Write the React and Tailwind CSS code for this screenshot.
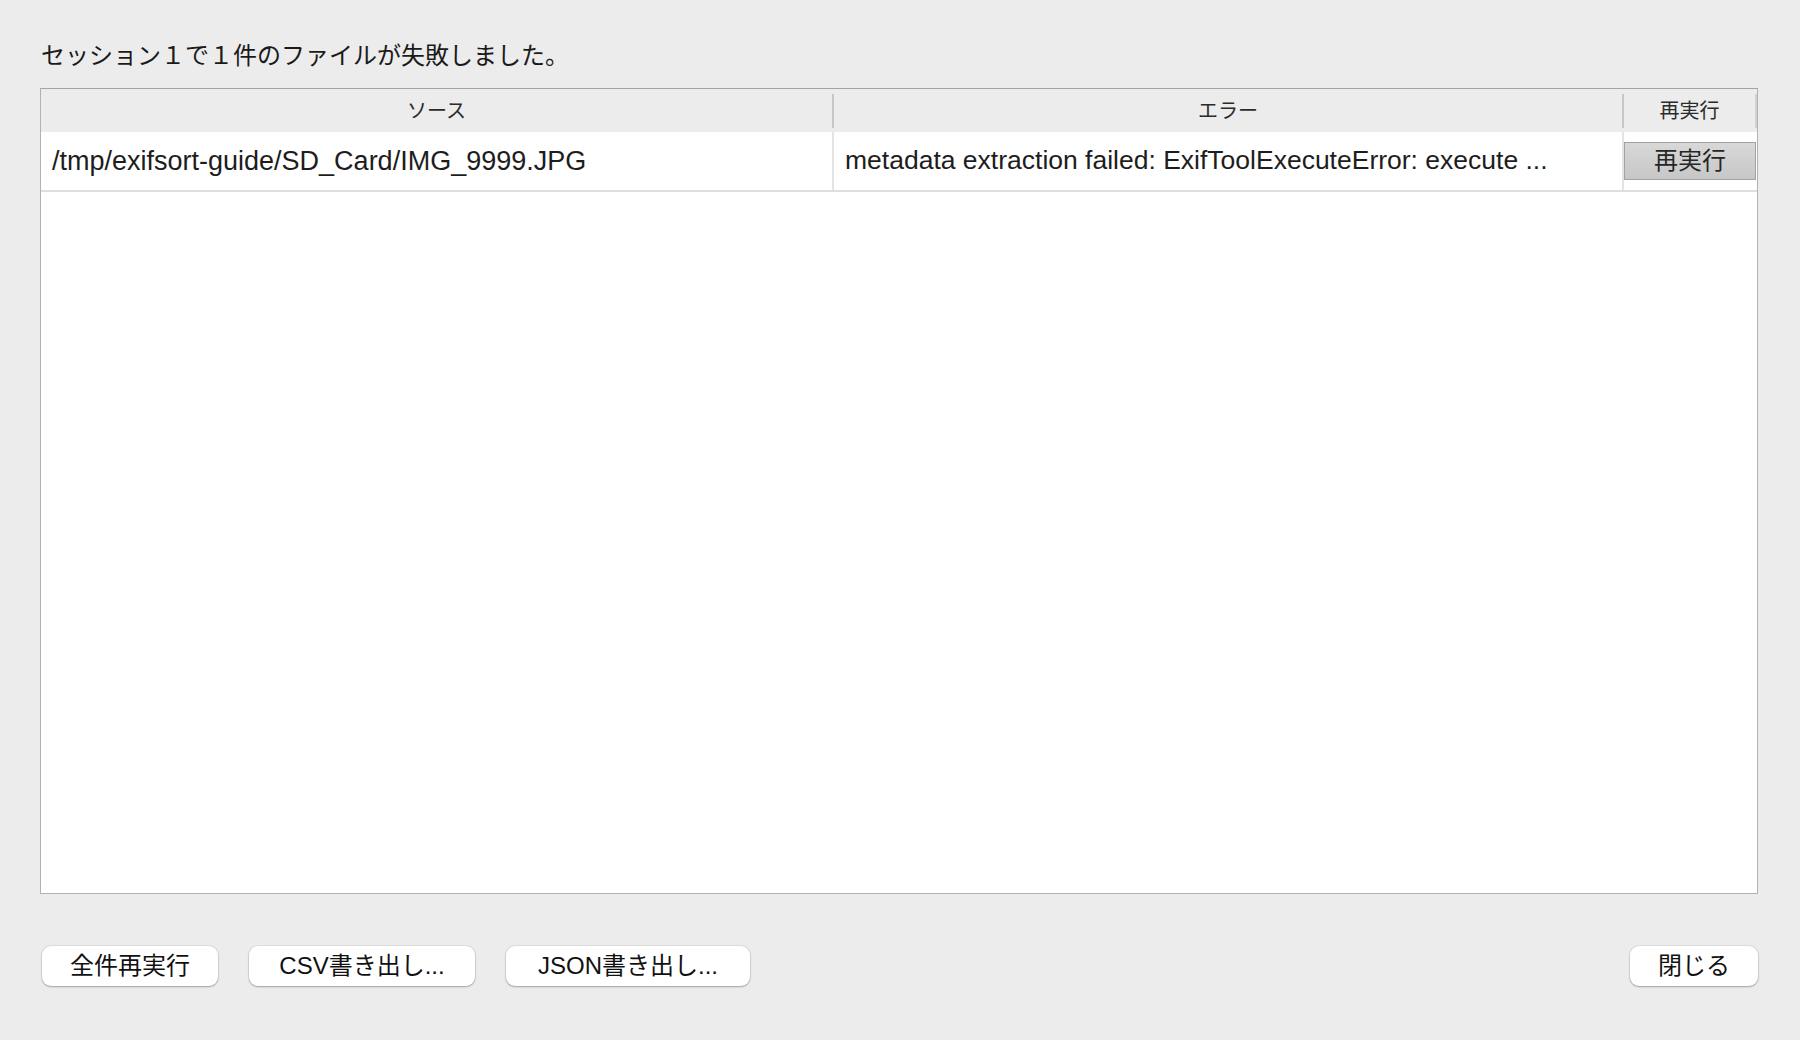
import React from 'react';

const failures = [
  {
    source: '/tmp/exifsort-guide/SD_Card/IMG_9999.JPG',
    error: 'metadata extraction failed: ExifToolExecuteError: execute ...',
  },
];

function HeaderCell({ label, width, last }) {
  return (
    <>
      <div className={`${width} flex items-center justify-center text-[20px] leading-[26px] text-[#2b2b2b]`}>
        {label}
      </div>
      <div className={`w-[2px] h-[34px] ${last ? 'bg-[#d2d2d2]' : 'bg-[#c6c6c6]'}`} />
    </>
  );
}

function FooterButton({ children, width }) {
  return (
    <button
      className={`${width} h-[40px] rounded-[9px] bg-white text-[24px] leading-[30px] text-[#111] flex items-center justify-center shadow-[0_0_0_1px_rgba(0,0,0,0.06),0_1px_2px_rgba(0,0,0,0.28)]`}
    >
      {children}
    </button>
  );
}

export default function App() {
  return (
    <div className="h-[1040px] w-full bg-[#ececec] pl-[40px] pr-[42px] pt-[40px] flex flex-col font-['Liberation_Sans','Noto_Sans_CJK_JP',sans-serif] text-[#1a1a1a]">
      <div className="h-[32px] leading-[32px] text-[24px] mb-[16px] pl-[1px]">
        セッション１で１件のファイルが失敗しました。
      </div>

      <div className="h-[806px] border border-[#b2b2b2] border-t-[#a4a4a4] bg-white flex flex-col">
        <div className="h-[43px] bg-[#ececec] flex items-center">
          <HeaderCell label="ソース" width="w-[791px]" />
          <HeaderCell label="エラー" width="w-[788px]" />
          <HeaderCell label="再実行" width="w-[131px]" last />
        </div>

        {failures.map((f) => (
          <div key={f.source} className="h-[60px] flex border-b-2 border-[#dedede]">
            <div className="w-[791px] flex items-center pl-[11px] text-[27px] text-[#1d1d1d] whitespace-nowrap overflow-hidden">
              {f.source}
            </div>
            <div className="w-[2px] bg-[#e4e4e4]" />
            <div className="w-[788px] flex items-center pl-[11px] text-[26.5px] text-[#1d1d1d] whitespace-nowrap overflow-hidden">
              {f.error}
            </div>
            <div className="w-[2px] bg-[#e4e4e4]" />
            <div className="flex-1 flex items-center">
              <button className="w-[132px] h-[38px] border border-[#a2a2a2] bg-[linear-gradient(#d8d8d8,#c7c7c7)] text-[24px] leading-[30px] text-[#262626] flex items-center justify-center">
                再実行
              </button>
            </div>
          </div>
        ))}
      </div>

      <div className="mt-[52px] flex items-center gap-[31px] pl-[2px]">
        <FooterButton width="w-[176px]">全件再実行</FooterButton>
        <FooterButton width="w-[226px]">CSV書き出し...</FooterButton>
        <FooterButton width="w-[244px]">JSON書き出し...</FooterButton>
        <div className="ml-auto">
          <FooterButton width="w-[128px]">閉じる</FooterButton>
        </div>
      </div>
    </div>
  );
}
